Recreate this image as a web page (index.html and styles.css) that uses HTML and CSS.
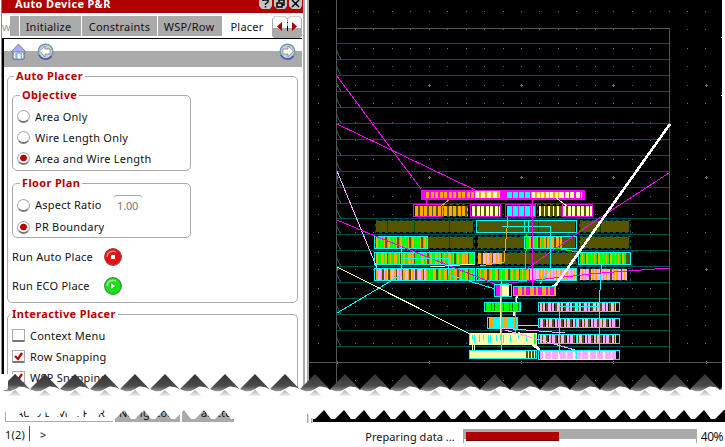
FILE: index.html
```html
<!DOCTYPE html>
<html lang="en">
<head>
<meta charset="utf-8">
<title>Auto Device P&amp;R</title>
<link rel="stylesheet" href="styles.css">
</head>
<body>
<div class="window">
  <div class="workspace">
    <aside class="panel">
      <header class="titlebar">
        <span class="title">Auto Device P&amp;R</span>
        <span class="win-buttons">
          <svg class="win-btn" viewBox="0 0 13 11"><path class="btn-face" d="M0 0h13v6l-2 3H3L0 6z"/><path class="btn-ink" d="M4 1V0h5v2L6.500 4v1M6.500 6v1.500"/></svg>
          <svg class="win-btn" viewBox="0 0 13 11"><path class="btn-face" d="M0 0h13v6l-2 3H3L0 6z"/><path class="btn-ink" d="M5 2V0h5v5H8M3 3h5v4H3z"/></svg>
          <svg class="win-btn" viewBox="0 0 13 11"><path class="btn-face" d="M0 0h13v6l-2 3H3L0 6z"/><path class="btn-ink" d="M3 0l7 7M10 0L3 7"/></svg>
        </span>
      </header>
      <nav class="tabs">
        <span class="tab-cut">w</span><span class="tab tab-sliver"></span>
        <span class="tab tab-init">Initialize</span>
        <span class="tab tab-cons">Constraints</span>
        <span class="tab tab-wsp">WSP/Row</span>
        <span class="tab tab-placer">Placer</span>
        <svg class="tab-arrows" viewBox="0 0 30 22"><path d="M0 12h30v8l-2 2H2l-2-2z" fill="#aaa"/><path d="M.5 18V3l3-3h9l3 3 3-3h8l3 3v9M15.500 2v16" fill="none" stroke="#aaa"/><path d="M15.500 6v1m0 3v5" stroke="#000"/><path d="M10 6v9l-5-4.500zM20 6v9l5-4.500z" fill="#b00000"/></svg>
      </nav>
      <div class="toolbar">
        <svg class="tool" viewBox="0 0 17 17"><path d="M3 8v8h11V8z" fill="#fff" stroke="#5058b8"/><path d="M8.500 1L1 9h15z" fill="#aaaaff" stroke="#7a8490"/><path d="M5 9h7v6H5z" fill="#b8b8ff"/><path d="M7 10h4v6H7z" fill="#fff" stroke="#4a9a98" stroke-width=".7"/></svg>
        <svg class="tool" viewBox="0 0 17 17"><circle cx="8.500" cy="8.500" r="7.300" fill="#c4d2df" stroke="#7898a8" stroke-width="1.500"/><path d="M2 12a7.300 7.300 0 0 0 12.500 1" fill="none" stroke="#4a50b8" stroke-width="1.500"/><path d="M2.500 8l5.500-5v3h5v5H8v3z" fill="#fff" stroke="#777" stroke-width=".7"/></svg>
        <svg class="tool tool-next" viewBox="0 0 17 17"><circle cx="8.500" cy="8.500" r="7.300" fill="#c4d2df" stroke="#7898a8" stroke-width="1.500"/><path d="M2 12a7.300 7.300 0 0 0 12.500 1" fill="none" stroke="#4a50b8" stroke-width="1.500"/><path d="M14.500 8L9 3v3H4v5h5v3z" fill="#fff" stroke="#777" stroke-width=".7"/></svg>
      </div>
      <div class="form">
        <fieldset class="group auto-placer">
          <legend>Auto Placer</legend>
          <fieldset class="group objective">
            <legend>Objective</legend>
            <label class="opt"><i class="radio"></i>Area Only</label>
            <label class="opt"><i class="radio"></i>Wire Length Only</label>
            <label class="opt"><i class="radio on"></i>Area and Wire Length</label>
          </fieldset>
          <fieldset class="group floor">
            <legend>Floor Plan</legend>
            <label class="opt"><i class="radio"></i>Aspect Ratio<span class="ratio">1.00</span></label>
            <label class="opt"><i class="radio on"></i>PR Boundary</label>
          </fieldset>
          <div class="run"><span class="run-name">Run Auto Place</span>
            <svg class="ball" viewBox="0 0 18 18"><circle cx="9" cy="9" r="8.300" fill="#ee0b0b" stroke="#9c3c3c" stroke-width="1.200"/><path d="M3 9a6 6 0 0 1 9-5" fill="none" stroke="#ff8080" stroke-width="1.500"/><path d="M6.500 6.500h5v5h-5z" fill="#fff" stroke="#a33"/></svg></div>
          <div class="run"><span class="run-name">Run ECO Place</span>
            <svg class="ball" viewBox="0 0 18 18"><circle cx="9" cy="9" r="8.300" fill="#12e512" stroke="#3c8c3c" stroke-width="1.200"/><path d="M3 9a6 6 0 0 1 9-5" fill="none" stroke="#90ff90" stroke-width="1.500"/><path d="M6.500 5.500l5.500 3.500-5.500 3.500z" fill="#fff" stroke="#494" stroke-width=".8"/></svg></div>
        </fieldset>
        <fieldset class="group interactive">
          <legend>Interactive Placer</legend>
          <label class="opt"><i class="check"></i>Context Menu</label>
          <label class="opt"><i class="check"></i><svg class="tick" viewBox="0 0 9 9"><path d="M1 4l3 3 4-6" /></svg>Row Snapping</label>
          <label class="opt"><i class="check"></i><svg class="tick" viewBox="0 0 9 9"><path d="M1 4l3 3 4-6" /></svg>WSP Snapping</label>
        </fieldset>
      </div>
    </aside>
    <svg class="layout" id="layout" viewBox="309 0 413 398" shape-rendering="crispEdges"></svg>
  </div>
  <div class="dock">
    <span class="dock-tab current">Auto Device P&amp;R</span>
    <span class="dock-tab nav">Navigator</span>
    <span class="dock-tab pal">Palette</span>
    <span class="dock-canvas"></span>
  </div>
  <footer class="status">
    <span class="count">1(2)</span><span class="prompt">&gt;</span>
    <span class="task">Preparing data ...</span>
    <span class="progress"><span class="bar"></span></span>
    <span class="percent">40%</span>
  </footer>
  <svg class="tear" id="tear" viewBox="0 0 725 60"></svg>
</div>
<script src="script.js"></script>
</body>
</html>
```
FILE: styles.css
```css
* { box-sizing: border-box; }
body { margin: 0; background: #fff; color: #111; font: 11px/16px "Noto Sans", "Open Sans", sans-serif; letter-spacing: .23px; overflow: hidden; }
.window { position: relative; width: 725px; height: 447px; display: flex; flex-direction: column; }
.workspace { display: flex; height: 398px; overflow: hidden; }
.panel { width: 309px; height: 387px; padding: 0 7px 0 2px; display: flex; flex-direction: column; background: linear-gradient(90deg, #fff 0 1px, #888 1px 2px, #000 2px 4px, #fff 4px 303px, #aaa 303px 305px, #fff 305px 307px, #aaa 307px 309px); white-space: nowrap; }
.titlebar { height: 13px; flex: none; background: #b00000; display: flex; justify-content: space-between; border-bottom: 1px solid #a00; margin-right: -1px; }
.title { color: #fff; font-weight: 700; font-size: 11px; line-height: 16px; margin: -4px 0 0 13px; letter-spacing: .35px; }
.win-buttons { display: flex; gap: 2px; padding-right: 1px; }
.win-btn { width: 13px; height: 11px; }
.btn-face { fill: #c4c4c4; }
.btn-ink { fill: none; stroke: #000; stroke-width: 1.5; }
.tabs { display: flex; flex: none; height: 25px; padding-top: 3px; background: #fff; }
.tab { height: 20px; background: #aaa; border-right: 1px solid #fff; text-align: center; line-height: 22px; }
.tab-cut { width: 8px; overflow: hidden; color: #999; line-height: 22px; }
.tab-sliver { width: 10px; }
.tab-init { width: 62px; padding-right: 4px; }
.tab-cons { width: 76px; }
.tab-wsp { width: 65px; padding-right: 2px; }
.tab-placer { width: 49px; background: #fff; line-height: 21px; }
.tab-arrows { width: 30px; height: 22px; }
.toolbar { flex: none; display: flex; height: 29px; margin: 0 0 0 1px; padding: 4px 6px 0 7px; gap: 10px; border-top: 1px solid #000; background: linear-gradient(#fff 0 12px, #aaa 12px 28px, #fff 28px); }
.toolbar { margin-left: 2px; padding-left: 6px; }
.tool { width: 17px; height: 17px; }
.tool-next { margin-left: auto; }
.form { padding: 2px 4px 0 5px; }
.group { display: block; min-width: 0; margin: 0; padding: 0; border: 1px solid #aaa; border-radius: 5px; }
legend { color: #b90000; font-weight: 700; font-size: 11px; line-height: 14px; height: 14px; margin-left: 6px; padding: 0 2px; letter-spacing: .35px; }
.auto-placer { height: 234px; padding: 5px 4px; }
.auto-placer > legend, .interactive > legend { margin-left: 2px; }
.objective { width: 179px; height: 83px; padding-top: 4px; }
.objective .opt { height: 21px; }
.floor { width: 179px; height: 62px; padding-top: 4px; margin-top: 5px; }
.floor .opt { height: 22px; }
.opt { display: flex; align-items: center; padding-left: 4px; }
.radio, .check { display: block; flex: none; width: 13px; height: 13px; margin-right: 5px; background: #fff; border: 1px solid #aaa; border-bottom: 2px solid #777; }
.radio { border-radius: 50%; }
.radio.on { background: radial-gradient(circle at 50% 50%, #b90000 0 3px, #fff 3.700px); }
.ratio { width: 30px; height: 20px; margin: 0 0 0 11px; background: linear-gradient(#fff, #fff) 0 4px / 100% 100% no-repeat; border-top: 1px solid #aaa; border-radius: 4px; color: #777; text-align: center; line-height: 20px; letter-spacing: -.2px; }
.objective legend, .floor legend { margin-left: 7px; }
.run { display: flex; align-items: center; height: 29px; }
.floor + .run { margin-top: 4px; }
.run-name { width: 92px; }
.ball { width: 18px; height: 18px; }
.interactive { height: 100px; margin-top: 4px; padding-top: 4px; border-bottom: 0; }
.interactive .opt { height: 21px; }
.auto-placer + .interactive .opt { padding-left: 4px; }
.check { border-radius: 1px; margin-right: 5px; }
.tick { width: 9px; height: 9px; margin: 0 7px 0 -16px; fill: none; stroke: #b90000; stroke-width: 2.300; }
.layout { width: 413px; height: 398px; flex: none; background: #000; }
.dock { display: flex; height: 26px; padding: 11px 0 2px 5px; white-space: nowrap; }
.dock-tab { height: 13px; padding-left: 10px; line-height: 7px; margin-right: 2px; overflow: hidden; background: #aaa; }
.current { width: 108px; background: #fff; border: solid #aaa; border-width: 0 0 1px 1px; }
.nav { width: 65px; padding-left: 4px; }
.pal { width: 52px; padding-left: 12px; }
.dock-canvas { flex: 1; margin-left: 77px; background: #000; }
.status { display: flex; height: 23px; padding: 2px 2px 3px 5px; line-height: 19px; }
.count { width: 25px; border-right: 1px solid #555; height: 15px; line-height: 18px; }
.prompt { margin-left: 10px; line-height: 18px; }
.task { margin-left: auto; line-height: 22px; letter-spacing: .05px; }
.progress { width: 234px; height: 14px; margin: 3px 4px 0 8px; padding: 3px 1px 0 2px; background: linear-gradient(#aaa 0 10px, transparent 10px); border-right: 1px solid #aaa; border-left: 1px solid #aaa; }
.bar { display: block; width: 93px; height: 9px; background: #b00000; border-bottom: 1px solid #600; }
.percent { font-size: 12px; line-height: 22px; letter-spacing: -.5px; }
.tear { position: absolute; left: 0; top: 365px; width: 725px; height: 60px; }
```
FILE: script.js
```js
const C = { g: '#00ff00', G: '#007800', o: '#ffaa00', v: '#555500', m: '#ff00ff', c: '#00ffff', p: '#ffaaff', y: '#ffffaa', w: '#fff', k: '#000', t: '#005555', s: '#555', n: '#151560' };
const out = [];
const col = k => C[k] || k;
const rect = (x, y, w, h, f) => out.push(`<rect x="${x}" y="${y}" width="${w}" height="${h}" fill="${col(f)}"/>`);
const box = (x1, y1, x2, y2, s, dash) => out.push(`<rect x="${x1 + .5}" y="${y1 + .5}" width="${x2 - x1 - 1}" height="${y2 - y1 - 1}" fill="none" stroke="${col(s)}" ${dash ? 'stroke-dasharray="3 3"' : ''}/>`);
const wire = (pts, s, w = 1) => out.push(`<polyline points="${pts}" fill="none" stroke="${col(s)}" stroke-width="${w}"/>`);
// A device: vertical fingers cycling through the given pattern, `step` pixels each.
const dev = (x1, y1, x2, y2, pattern, step = 2) => {
  for (let x = x1, i = 0; x < x2; x += step, i++) rect(x, y1, Math.min(step, x2 - x), y2 - y1, pattern[i % pattern.length]);
};

// Grid
for (let i = 0; i < 22; i++) for (let j = 0; j < 21; j++) rect(Math.round(318 + i * 18.450), Math.round(11 + j * 18.450), 1, 1, '#666');
for (const x of [337, 429, 521, 613, 706]) for (const y of [85, 177, 269, 362]) { rect(x - 1, y, 3, 1, '#666'); rect(x, y - 1, 1, 3, '#666'); }
for (let i = 0; i < 20; i++) {
  const y = Math.round(43 + i * 15.950);
  rect(337, y, 332, 1, 't');
  if (i) wire(`337,${y - 8} 339,${y - 3} 341,${y}`, 't');
}
rect(336, 0, 1, 398, 's'); rect(336, 28, 334, 1, 's'); rect(669, 28, 1, 335, 's'); rect(309, 362, 413, 1, 's');
rect(721, 37, 1, 1, 'w'); rect(721, 95, 1, 1, 'w');

// Row 1
rect(421, 190, 84, 10, 'm'); dev(426, 192, 475, 198, 'oom', 1.5); dev(475, 191, 500, 198, 'yyo');
rect(503, 190, 82, 10, 'm'); dev(507, 192, 532, 198, 'cccm', 1.5); dev(532, 192, 560, 198, 'yyo', 1.5); dev(560, 192, 582, 198, 'yyym', 1.3);
// Row 2
dev(415, 206, 443, 216, 'oov', 1.5); box(413, 204, 444, 217, 'm'); dev(444, 206, 468, 216, 'oov', 1.5); box(443, 204, 468, 217, 'v', 1);
dev(472, 206, 500, 216, 'yyv', 1.5); box(470, 204, 501, 217, 'm');
dev(507, 206, 535, 216, 'cccm', 1.5); box(505, 204, 536, 217, 'm');
dev(539, 206, 562, 216, 'yvv', 1.5); box(537, 204, 563, 217, 'v', 1); dev(563, 206, 592, 216, 'yyv', 1.5); box(562, 204, 593, 217, 'm');
// Rows 3 and 4
for (const y of [220, 236]) for (const [a, b] of [[375, 475], [477, 577], [579, 631]]) {
  rect(a + 1, y + 1, b - a - 2, 11, 'v'); box(a, y, b, y + 13, 't', 1); rect(b - 2, y + 1, 1, 11, '#500000');
}
for (const x of [387, 414, 449, 538, 600]) rect(x, 221, 1, 11, '#005000');
rect(449, 237, 1, 11, '#005000');
box(476, 220, 577, 233, 'c'); rect(524, 220, 1, 13, 'c'); rect(528, 220, 1, 13, 'c');
dev(376, 237, 427, 248, 'oggogovg', 1.5); box(374, 236, 428, 249, 'c');
dev(526, 237, 551, 248, 'ggovo', 1.5); dev(551, 237, 562, 248, 'oov', 1.5); box(524, 236, 577, 249, 'c');
// Row 5
dev(376, 253, 474, 264, 'oggoogovg', 1.5); box(374, 252, 475, 265, 'c');
dev(478, 253, 504, 264, 'oovppop', 1.5); rect(504, 253, 72, 11, 'v'); box(477, 252, 577, 265, 't', 1);
dev(580, 253, 626, 264, 'gogvoggo', 1.5); rect(626, 253, 4, 11, 'v'); box(578, 252, 631, 265, 'c');
// Row 6
dev(376, 269, 427, 280, 'oppovpopv', 1.5); dev(427, 269, 474, 280, 'goggoov', 1.5); box(374, 268, 475, 281, 'c');
dev(478, 269, 530, 280, 'goggoov', 1.5); dev(530, 269, 576, 280, 'popoppo', 1.5); box(476, 268, 577, 281, 'c');
dev(580, 269, 627, 280, 'popoppv', 1.5); box(579, 268, 631, 281, 't', 1);

// Routes from the boundary
wire('337,76 421,189', 'm'); wire('337,124 475,190', 'm'); wire('337,171 377,268', 'p');
wire('337,220 375,236 495,284', 'm'); wire('337,267 470,334', 'y'); wire('337,313 401,275 401,243', 'c');
wire('669,173 595,221 525,270', 'm'); wire('669,268 600,273 500,284', 'm');
wire('670,124 555,286', 'w', 2.6); wire('555,286 517,294 514,316', 'w', 2); wire('518,333 540,350', 'w', 3);
wire('401,258 448,258 449,275 495,289', 'c'); wire('502,226 550,226 550,268 540,284', 'c');
wire('508,217 504,262 480,266', 'o'); wire('527,234 525,268', 'g'); wire('532,198 532,220 532,290', 'm');
wire('426,200 426,204', 'm'); wire('449,200 441,206', 'o'); wire('556,198 567,206', 'y');
wire('430,267 475,264', 'y'); wire('555,248 578,252', 'g');

// Lower devices
dev(496, 285, 502, 297, 'mmp'); dev(502, 285, 509, 297, 'y'); box(494, 284, 512, 297, 'c');
dev(514, 287, 555, 295, 'mmoomo'); box(513, 286, 556, 296, 'c');
dev(486, 303, 520, 311, 'gggGgG', 1.5); box(484, 302, 521, 312, 'c');
dev(489, 318, 517, 328, 'oocccoc'); box(487, 317, 518, 329, 'c');
rect(470, 333, 66, 12, 'y');
for (const [x, h] of [[472, 4], [474, 8], [479, 7], [483, 5], [488, 8], [490, 8], [496, 6], [500, 5], [503, 8], [510, 7], [518, 4], [526, 6]]) rect(x, 335, 1, h, 'c');
dev(534, 334, 537, 344, 'gc', 1); box(469, 333, 537, 345, 'y'); rect(469, 333, 1, 11, 'c');
rect(470, 350, 56, 9, 'y'); dev(526, 350, 536, 358, 'vvy', 1); box(469, 350, 537, 359, 'c');
for (const [y, p] of [[302, 'pvpkvp'], [318, 'ppvkpv'], [334, 'pvppvk'], [350, 'ppwpp']]) {
  dev(540, y + 1, 616, y + 9, p, 1.5); box(538, y, 620, y + 10, 'c'); rect(576, y, 1, 10, 'c');
}
rect(541, 359, 72, 1, 'w');
wire('501,270 501,350', 'c'); wire('559,306 559,354', 'c'); wire('559,306 599,306 599,354', 'c'); wire('602,259 599,306', 'c');
wire('515,297 515,334', 'g'); wire('500,297 500,333', 'y'); wire('472,344 472,350', 'y'); wire('474,344 474,350', 'y');
wire('518,325 538,325', 'p'); wire('500,328 565,333', 'p'); wire('505,330 575,350', 'p');
document.getElementById('layout').innerHTML = out.join('');

// Torn edge between the two halves of the window
let t = '<defs><linearGradient id="d" x1="0" y1="0" x2="0" y2="1"><stop offset="0" stop-color="#333"/><stop offset=".7" stop-color="#4c4c4c"/><stop offset="1" stop-color="#999"/></linearGradient><linearGradient id="h" x1="0" y1="0" x2="0" y2="1"><stop offset="0" stop-color="#aaa"/><stop offset="1" stop-color="#f4f4f4"/></linearGradient></defs>';
t += '<path fill="#fff" d="M0 24';
for (let x = 0; x < 740; x += 30) t += `L${x + 15} 10L${x + 30} 25`;
t += 'V34H0z"/>';
for (let x = 0; x < 740; x += 30) {
  t += `<path fill="url(#d)" d="M${x} 24L${x + 15} 9L${x + 30} 24.500Q${x + 25} 21 ${x + 19} 21.500C${x + 13} 25 ${x + 9} 29 ${x} 24z"/>`;
  t += `<path fill="url(#h)" d="M${x + 15} 25l7 6h-14z"/>`;
}
t += '<path fill="#fff" d="M0 9V25H7Q9 20 15 9z"/><path fill="url(#d)" d="M15 9L30 24.500Q25 21 19 21.500Q14 27 8 22V16z"/>';
t += '<path fill="#fff" d="M0 32H725V45';
for (let x = 723; x > -10; x -= 20) t += `L${x + 1} 45L${x - 8} 54H${x - 12}L${x - 19} 45`;
t += 'V32z"/><path fill="#fff" d="M722 0h3v32h-3z"/><path fill="#aaa" d="M307 49h1.500v9h-1.500zM311 53h1.500v5h-1.500z"/>';
document.getElementById('tear').innerHTML = t;
```
